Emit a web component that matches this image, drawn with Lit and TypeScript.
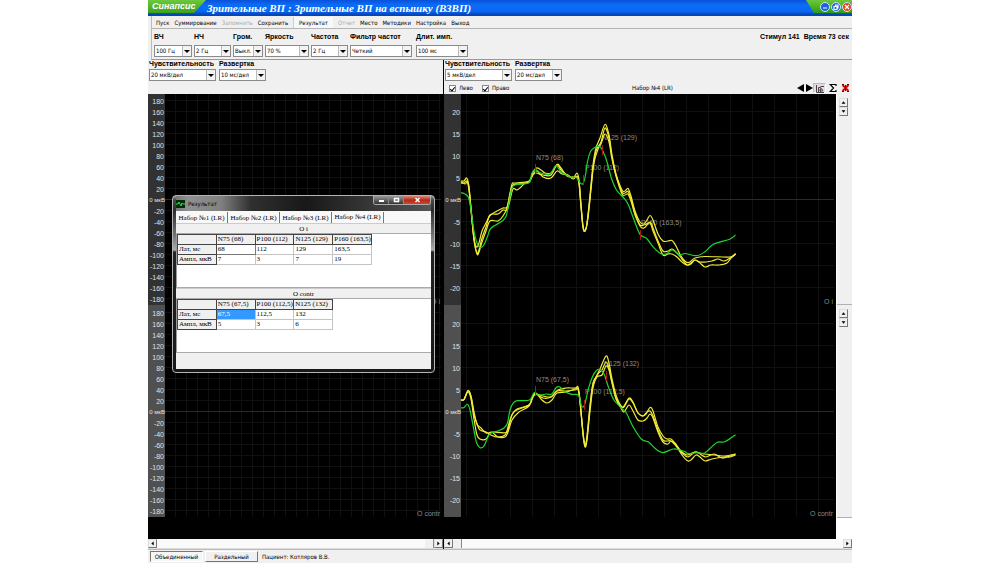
import { LitElement, html, svg, css } from "lit";
import { customElement, property, state } from "lit/decorators.js";

type Pt = [number, number];

/** Parses "x,y x,y ..." into points. */
const pts = (s: string): Pt[] =>
  s.trim().split(/\s+/).map((p) => p.split(",").map(Number) as Pt);

/** Smooth path through the points (Catmull-Rom converted to cubic Beziers). */
const smooth = (s: string): string => {
  const p = pts(s);
  let d = `M${p[0][0]} ${p[0][1]}`;
  for (let i = 0; i < p.length - 1; i++) {
    const a = p[i - 1] ?? p[i], b = p[i], c = p[i + 1], e = p[i + 2] ?? c;
    d += `C${(b[0] + (c[0] - a[0]) / 6).toFixed(1)} ${(b[1] + (c[1] - a[1]) / 6).toFixed(1)} ${(c[0] - (e[0] - b[0]) / 6).toFixed(1)} ${(c[1] - (e[1] - b[1]) / 6).toFixed(1)} ${c[0]} ${c[1]}`;
  }
  return d;
};

interface Mark { label: string; x: number; y: number; lx: number; ly: number; }
interface Channel { name: string; top: number; bottom: number; zero: number; green: string; yellow: string[]; marks: Mark[]; }

const CHANNELS: Channel[] = [
  {
    name: "O i", top: 94, bottom: 305, zero: 200,
    green: "461,192.7 465,194 468.5,197.5 470.7,208 474,231.5 477.5,244.5 480,247.5 483.5,245.5 487.5,236.5 490.7,228.5 501.5,221.5 506,216.5 508.5,205 512,188.3 516,184.7 529,182.7 531.6,174 535,169.3 540,172.7 545,174 550.5,173.7 556,165.5 560.5,171.5 566.5,175 571.5,177.5 576.5,177.5 580,182.7 583,183.5 585.5,175 587.5,161.5 590.5,151.5 595,147.3 600,146.7 604,153.5 607.5,163.5 611.5,178.5 616.5,190 625,199.3 628.5,205 633.5,218.5 640,234.3 646.5,238.3 653.5,247.3 661.5,254 667,253.5 672.5,250 679.5,255 685,253.5 696.5,255.7 705,251.7 713.5,244.3 730,239 735.5,235",
    yellow: [
      "461,181 464,181 466.5,178 468.5,184 471,208 474,238 476.5,247 479,243 482,231 486,223 490,215.5 497,211 503,208 507,207 510,195 512,184 516,183 529,181 533,172 536.5,168 541,170 545,173 551,173 557,165 561,170 567,175 573,178 577,173 579,180 581,204 583,226 585,231 587,224 590,195 593,165 596,148 600,138 605,124.5 609,135 612,155 616,174 622,190 625,191 628,188.5 631,196 635,211 640,222 644,224 647,220 650,215.5 653,220 658,234 663,241 668,241 672,240.5 676,246 681,256 686,262 690,262 695,258 705,256.5 730,257 735.5,254",
      "461,182 465,184 468,184 471,209 474,240 477,254 479,252 482,242 486,231 490,221 498,221 503,216 507,208 510,193 513,185 519,184 529,182 533,174 537,171 543,177 551,178 557,171 562,174 568,175 573,179 577,176 579,182 581,206 583,228 585,231 587,223 590,198 593,168 596,151 601,142 605,128 609,138 612,157 616,175 622,192 625,193 628,191.5 631,199 635,213 640,226 644,228 650,222 653,228 658,241 663,251 668,251 672,249 677,253 682,259 687,265 691,264 695,260 700,262 706,262 712,261 718,259 724,261 730,258 735.5,253.5",
      "461,183 464,183 467,181 469,187 471,210 474,239 477,253 479,250 482,238 486,227 490,215 498,214 503,210 507,210 510,200 513,189 517,190 521,187 525,183 529,182 533,175 536,173 543,175 551,175 557,164.5 561,168 567,176 573,177 577,177 579,184 581,207 583,226 585,231 588,218 591,189 594,163 598,149 601,144 605,134 609,142 612,159 616,176 622,194 625,195 628,194 631,201 635,215 640,225 644,225 650,223 653,231 658,243 663,255 668,254 672,254 677,257 682,262 687,265 691,263 695,260 700,263 705,267 711,265 719,265 727,263 731,258 735.5,254",
    ],
    marks: [
      { label: "N75 (68)", x: 535, y: 164, lx: 536, ly: 160 },
      { label: "P100 (112)", x: 583, y: 175, lx: 585, ly: 170 },
      { label: "N125 (129)", x: 602, y: 145, lx: 602, ly: 140 },
      { label: "P160 (163,5)", x: 640, y: 230, lx: 641, ly: 225 },
    ],
  },
  {
    name: "O contr", top: 305, bottom: 517, zero: 412,
    green: "461,408 464,407.5 467.5,404.3 470,410 473.5,428 476.5,442.5 480,447.7 484,446 487.5,438 490.5,433.3 498.5,430.7 504,428 507.5,423 510,410 513.5,402.7 517.5,400.7 529.5,400 534,392.7 538.5,395 546.5,394 551.5,394.3 556.5,387.3 560,387 565,391.7 571.5,394.3 578.5,395.3 581.5,406 584.5,405 588.5,388.3 592.5,376.7 596.5,370.5 600.7,369.7 604.5,375 608.5,387.3 614,400 623.5,410 626.5,413.3 633.5,427.5 641.5,439.3 648.5,442 655,448.3 662.5,452.7 673.5,449 683.5,451 688.5,453.7 696.5,452.7 705,452.7 716.5,442.7 725,441.7 735.5,434.7",
    yellow: [
      "461,400 464,399.5 468,390.5 471,396 474,412 477,424 481,428 486,433 493,432 506,432.5 509,426 512,415 517,409 529,405 533,397 536,394 543,398 551,397 558,390 566,388 575,388 578,387 580,400 583,434 585,446 587,436 590,405 593,383 596,377 600,369 606,356 609,363 612,379 616,395 621,406 624,406 629,398 633,402 638,413 643,416 646,414 650,407.5 653,411 658,427 663,436 667,439 671,439 675,443 681,451 687,455 695,452 704,454 715,455 725,456 735.5,454",
      "461,400 464,399.5 468,392 471,399 474,419 477,435 480,439 486,439 491,432 498,437 505,437 508,432 512,420 519,412 529,406 533,396 536,393 542,400 547,403 552,400 557,393 566,392 575,389 578,389 580,402 583,434 585,447 587,440 590,411 593,388 597,377 602,375 606,366 609,370 612,383 616,399 621,408 624,412 629,405 633,411 638,420 643,421 647,418 650,414 653,418 658,432 663,442 668,444 671,441 676,445 682,455 688,461 692,459 696,455 700,457 705,461 712,459 724,457 730,457 735.5,455",
      "461,400 464,399.5 468,391 471,397 474,414 477,424 480,430 486,432 491,435 497,437 505,435 508,427 511,417 515,411 529,405 532,398 536,394 543,396 551,397 557,391 566,391 575,390 578,389 580,401 583,432 585,444 587,438 590,408 593,384 598,374 602,370 606,362 609,368 612,382 616,398 621,406 624,407 629,399 633,403 638,413 643,416 647,412 650,411 653,416 658,430 663,440 667,441 671,441 676,446 682,453 688,457 695,452 700,454 706,457 714,454 722,458 730,456 735.5,454",
    ],
    marks: [
      { label: "N75 (67,5)", x: 535, y: 386, lx: 536, ly: 382 },
      { label: "P100 (112,5)", x: 584, y: 400, lx: 585, ly: 394 },
      { label: "N125 (132)", x: 606, y: 371, lx: 604, ly: 366 },
    ],
  },
];

const range = (from: number, to: number, step: number) =>
  Array.from({ length: Math.floor((to - from) / step) + 1 }, (_, i) => from + i * step);

@customElement("ep-chart")
class EpChart extends LitElement {
  @property({ type: Number }) left = 0;
  @property({ type: Number }) right = 0;
  @property({ type: Number }) cell = 11;
  @property({ type: Number }) unit = 20;
  @property({ type: Number }) steps = 9;
  @property({ type: Boolean }) traces = false;

  static styles = css`
    :host { display: block; background: #000; }
    svg { display: block; width: 100%; height: auto; font-family: "Liberation Sans", Arial, sans-serif; font-size: 7px; }
    .grid { stroke: #101010; stroke-width: 1; }
    .zero { stroke: #2a2a2a; stroke-width: 1; }
    .tick { fill: #e0e0e0; text-anchor: end; }
    .origin { font-size: 6px; }
    .name { fill: #8a8a8a; text-anchor: end; }
    .mark { fill: #8c8c8c; }
    .pin { stroke: #a81818; stroke-width: 1; }
    .yellow, .green { fill: none; stroke-width: 1.2; stroke-linejoin: round; }
    .yellow { stroke: #f0ea38; }
    .green { stroke: #1fd42c; }
  `;

  private channel(c: Channel, i: number) {
    const x0 = this.left + 17;
    return svg`
      <rect x=${this.left} y=${c.top} width="17" height=${c.bottom - c.top} fill=${i ? "#505050" : "#323232"}></rect>
      ${range(x0 + (this.cell === 22 ? 5 : 10), this.right - 2, this.cell).map((x) => svg`<line class="grid" x1=${x + 0.5} x2=${x + 0.5} y1=${c.top} y2=${c.bottom}></line>`)}
      ${range(-this.steps, this.steps, 1).map((n) => {
        const y = c.zero + n * this.cell;
        return y < c.top ? null : svg`
          <line class=${n ? "grid" : "zero"} x1=${x0} x2=${this.right - 2} y1=${y - 0.5} y2=${y - 0.5}></line>
          <text class=${n ? "tick" : "tick origin"} x=${n ? x0 - 1 : x0} y=${n ? y + 3 : y + 2}>${n ? -n * this.unit : "0 мкВ"}</text>`;
      })}
      <text class="name" x=${this.right - 3} y=${c.bottom - 1}>${c.name}</text>
      ${this.traces ? svg`
        ${c.marks.map((m) => svg`<text class="mark" x=${m.lx} y=${m.ly}>${m.label}</text>`)}
        ${c.yellow.map((y) => svg`<path class="yellow" d=${smooth(y)}></path>`)}
        <path class="green" d=${smooth(c.green)}></path>
        ${c.marks.map((m) => svg`<line class="pin" x1=${m.x + 0.5} x2=${m.x + 0.5} y1=${m.y} y2=${m.y + 10}></line>`)}` : null}
    `;
  }

  render() {
    return html`<svg viewBox="${this.left} 94 ${this.right - this.left} 445" role="img" aria-label="Кривые ВП">
      ${CHANNELS.map((c, i) => this.channel(c, i))}
    </svg>`;
  }
}

@customElement("combo-box")
class ComboBox extends LitElement {
  @property() label = "";
  @property() value = "";
  @property({ type: Number }) size = 38;

  static styles = css`
    :host { display: block; }
    label { display: block; height: var(--label-height, 12px); font: bold 7px/8px "Liberation Sans", Arial, sans-serif; color: #000; white-space: nowrap; }
    .box { display: grid; align-items: center; height: 12px; box-sizing: border-box; border: 1px solid #8a8a8a; background: #fff; }
    select { grid-area: 1 / 1; appearance: none; width: 100%; height: 10px; border: 0; margin: 0; padding: 0 8px 0 1px; background: transparent; color: #000; font: 6px/10px "DejaVu Sans Condensed", "Liberation Sans", sans-serif; outline: none; }
    svg { grid-area: 1 / 1; justify-self: end; pointer-events: none; box-sizing: border-box; width: 9px; height: 10px; background: #f2f2f2; border-left: 1px solid #bbb; }
  `;

  render() {
    return html`<label for="s">${this.label}</label>
      <div class="box" style="width:${this.size}px">
        <select id="s"><option>${this.value}</option></select>
        <svg viewBox="0 0 8 10" aria-hidden="true"><path d="M1 4h6L4 7z" fill="#000"/></svg>
      </div>`;
  }
}

const arrow = (dir: string) => {
  const d: Record<string, string> = {
    up: "M2 6h5L4.500 3z", down: "M2 3h5L4.500 6z", left: "M6 2v5L3 4.500z", right: "M3 2v5L6 4.500z",
  };
  return html`<button class="arrow" aria-label=${dir}><svg viewBox="0 0 9 9"><path d=${d[dir]} /></svg></button>`;
};

const TABLES = [
  { title: "O i", cols: ["N75 (68)", "P100 (112)", "N125 (129)", "P160 (163,5)"], rows: [["Лат, мс", "68", "112", "129", "163,5"], ["Ампл, мкВ", "7", "3", "7", "19"]] },
  { title: "O contr", cols: ["N75 (67,5)", "P100 (112,5)", "N125 (132)"], rows: [["Лат, мс", "67,5", "112,5", "132"], ["Ампл, мкВ", "5", "3", "6"]] },
];

@customElement("result-window")
class ResultWindow extends LitElement {
  @state() private tab = 4;

  static styles = css`
    :host { display: block; box-sizing: border-box; padding: 0 3px 3px; border: 1px solid #b4b4b4; border-radius: 4px; background: linear-gradient(#999 0, #484848 4px, #2c2c2c 14px, #777 40px, #aaa 54px, #222 56px, #181818 100%); font: 7px/10px "Liberation Serif", "Times New Roman", serif; color: #000; }
    * { box-sizing: border-box; }
    button { font: inherit; color: inherit; border: 0; padding: 0; margin: 0; }
    header { display: flex; align-items: center; height: 15px; gap: 3px; background: linear-gradient(90deg, #777, #909090 12px, #808080 45px, #303030 75px, #181818 130px, #555); }
    .icon { width: 9px; height: 8px; }
    h2 { flex: 1; margin: 0; font: 6px/10px "DejaVu Sans Condensed", "Liberation Sans", sans-serif; color: #000; }
    .controls { display: flex; align-self: flex-start; height: 9px; border: 1px solid #aaa; border-top: 0; border-radius: 0 0 3px 3px; overflow: hidden; }
    .controls button { display: grid; place-items: center; width: 15px; background: linear-gradient(#999, #333); border-right: 1px solid #888; }
    .controls .close { width: 26px; background: linear-gradient(#d98a7c, #b52a18 50%, #d0452c); border: 0; }
    .controls svg { width: 7px; height: 6px; stroke: #fff; fill: none; stroke-width: 2; }
    .body { background: #f0f0f0; }
    .tabs { display: flex; height: 12px; padding-top: 1px; background: #f8f8f8; }
    .tabs button { width: 52px; padding-top: 1px; white-space: nowrap; background: transparent; border-right: 1px solid #777; }
    .tabs .active { padding: 0 0 1px; }
    h3 { margin: 0; height: 11px; font: 7px/10px "Liberation Serif", serif; text-align: center; background: #f0f0f0; border-top: 1px solid #ccc; border-bottom: 1px solid #aaa; }
    .sheet { height: 54px; background: #fff; border-left: 1px solid #999; border-bottom: 1px solid #aaa; }
    table { border-collapse: collapse; table-layout: fixed; }
    th, td { height: 10px; padding: 0 0 0 1px; border: 1px solid #c4c4c4; font-weight: normal; line-height: 9px; text-align: left; white-space: nowrap; overflow: hidden; }
    th { background: #f0f0f0; border-color: #444; }
    .focus { border-color: #777; }
    .selected { background: #3399ff; color: #fff; }
    footer { height: 16px; }
  `;

  render() {
    return html`
      <header>
        <svg class="icon" viewBox="0 0 9 8"><path fill="#062c0c" d="M0 0h9v8H0z"/><path d="M0 4h2l1-2 2 4 1-3 1 1h2" fill="none" stroke="#22e050"/></svg>
        <h2>Результат</h2>
        <div class="controls">
          <button aria-label="Свернуть"><svg viewBox="0 0 7 6"><path d="M1 4h5"/></svg></button>
          <button aria-label="Развернуть"><svg viewBox="0 0 7 6"><path d="M1.500 1.500h4v3h-4z" stroke-width="1.500"/></svg></button>
          <button class="close" aria-label="Закрыть"><svg viewBox="0 0 7 6"><path d="M1.500 1l4 4m0-4l-4 4" stroke-width="1.500"/></svg></button>
        </div>
      </header>
      <div class="body">
        <div class="tabs" role="tablist">
          ${[1, 2, 3, 4].map((n) => html`<button role="tab" aria-selected=${n === this.tab} class=${n === this.tab ? "active" : ""} @click=${() => (this.tab = n)}>Набор №${n} (LR)</button>`)}
        </div>
        ${TABLES.map((t, ti) => html`
          <h3>${t.title}</h3>
          <div class="sheet"><table style="width:${(t.cols.length + 1) * 39}px">
            <thead><tr><th></th>${t.cols.map((c) => html`<th>${c}</th>`)}</tr></thead>
            <tbody>${t.rows.map((r, ri) => html`<tr><th>${r[0]}</th>${r.slice(1).map((v, ci) => html`<td class=${ri || ci ? "" : ti ? "selected" : "focus"}>${v}</td>`)}</tr>`)}</tbody>
          </table></div>`)}
        <footer></footer>
      </div>`;
  }
}

@customElement("app-root")
class AppRoot extends LitElement {
  static styles = css`
    :host { display: block; padding: 0 14.8vw; background: #fff; font: 6px/10px "DejaVu Sans Condensed", "Liberation Sans", sans-serif; color: #000; }
    * { box-sizing: border-box; }
    button { font: inherit; color: inherit; margin: 0; padding: 0; border: 0; background: transparent; white-space: nowrap; }
    .app { background: #f0f0f0; }
    .title { display: flex; height: 16px; background: linear-gradient(#0a50d8, #0a6cf5 30%, #0868f4 70%, #0644b8 92%); }
    .brand { width: 58px; padding-left: 4px; background: linear-gradient(#6cc83c, #2f9a14); clip-path: polygon(0 0, 100% 0, 46px 13px, 0 13px); color: #fff; font: italic bold 9px/12px "Liberation Sans", sans-serif; }
    h1 { flex: 1; margin: 0; padding-left: 1px; color: #fff; font: italic bold 11px/17px "Liberation Serif", serif; white-space: nowrap; }
    .wincontrols { display: flex; align-items: center; gap: 1px; height: 13px; padding-left: 14px; background: linear-gradient(#6cc83c, #2f9a14); clip-path: polygon(0 0, 100% 0, 100% 100%, 8px 100%); }
    .wincontrols button { display: grid; place-items: center; width: 10px; height: 10px; border: 1px solid #cfe4ff; border-radius: 50%; background: #1b62dc; }
    .wincontrols .close { background: #e04420; }
    .wincontrols svg { width: 6px; height: 6px; stroke: #fff; fill: none; stroke-width: 1.2; }
    .menu { display: flex; align-items: center; height: 13px; margin-left: 3px; padding: 1px 0 0 4px; gap: 5px; border-left: 1px solid #bbb; border-bottom: 1px solid #b4b4b4; }
    .menu .tool { align-self: stretch; padding: 0 5px; background: #f8f8f8; border-left: 1px solid #ccc; }
    .menu :disabled { color: #aaa; }
    .toolbar { display: flex; height: 31px; margin-left: 3px; padding: 4px 3px 0 2px; gap: 2px; border-left: 1px solid #bbb; border-bottom: 1px solid #999; }
    .toolbar combo-box:last-of-type { margin-left: 2px; }
    .stats { margin-left: auto; font: bold 7px/8px "Liberation Sans", Arial, sans-serif; white-space: pre; }
    .work { position: relative; display: grid; grid-template-columns: 295fr 1px 408fr; }
    .split { background: #000; }
    .settings { --label-height: 9px; display: flex; gap: 3px; height: 22px; padding-left: 1px; }
    .row { display: flex; align-items: center; height: 12px; padding: 0 0 0 5px; }
    .row label { display: flex; align-items: center; gap: 3px; width: 33px; }
    .row input { appearance: none; display: grid; place-items: center; width: 7px; height: 7px; margin: 0; border: 1px solid #888; background: #fff; }
    .row input:checked::before { content: ""; width: 2px; height: 4px; border: solid #000; border-width: 0 1px 1px 0; transform: rotate(40deg); }
    .row .set { flex: 1; padding-left: 117px; }
    .icons { display: flex; align-items: center; }
    .icons button { display: grid; place-items: center; height: 10px; }
    .icons svg { display: block; height: 10px; }
    .icons .wide { width: 13px; }
    .icons .on { background: #dedede; border: 1px solid #bbb; border-right-color: #fff; border-bottom-color: #fff; }
    .view { display: flex; }
    .view ep-chart { flex: 1; }
    .strip { display: flex; flex-direction: column; width: 16px; border-left: 1px solid #fff; }
    .strip div { display: flex; flex-direction: column; padding: 4px 0 0 2px; border-bottom: 1px solid #b0b0b0; }
    .s1 { flex: 211; }
    .s2 { flex: 212; }
    .s3 { flex: 22; background: #fff; }
    .arrow { display: block; width: 9px; height: 9px; background: #f0f0f0; border: 1px solid #ddd; border-right-color: #777; border-bottom-color: #777; }
    .arrow svg { display: block; width: 100%; height: 100%; }
    .scroll { display: flex; justify-content: space-between; height: 10px; background: #fafafa; border-bottom: 1px solid #ddd; }
    .scroll span { display: flex; }
    .thumb { display: block; width: 9px; height: 9px; background: #f0f0f0; border-right: 1px solid #888; }
    .status { display: flex; align-items: center; gap: 2px; height: 14px; padding-left: 2px; border-top: 1px solid #bbb; }
    .status button { width: 53px; height: 11px; border: 1px solid #fff; border-right-color: #777; border-bottom-color: #777; }
    .status .pressed { border-color: #777 #fff #fff #777; background: #f6f6f6; }
    .status p { margin: 0; padding-left: 2px; }
    result-window { position: absolute; left: 24px; top: 135px; width: 263px; }
  `;

  render() {
    return html`<div class="app">
      <div class="title">
        <div class="brand">Синапсис</div>
        <h1>Зрительные ВП : Зрительные ВП на вспышку (ВЗВП)</h1>
        <div class="wincontrols">
          <button aria-label="Свернуть"><svg viewBox="0 0 6 6"><path d="M1 4h4"/></svg></button>
          <button aria-label="Развернуть"><svg viewBox="0 0 6 6"><path d="M1 2.500h3v3H1zM2.500 2V1H5v3H4"/></svg></button>
          <button class="close" aria-label="Закрыть"><svg viewBox="0 0 6 6"><path d="M1 1l4 4M5 1L1 5"/></svg></button>
        </div>
      </div>
      <nav class="menu">
        <button>Пуск</button><button>Суммирование</button><button disabled>Запомнить</button><button>Сохранить</button>
        <button class="tool">Результат</button><button disabled>Отчет</button><button>Место</button><button>Методики</button><button>Настройка</button><button>Выход</button>
      </nav>
      <div class="toolbar">
        <combo-box label="ВЧ" value="100 Гц" size="38"></combo-box>
        <combo-box label="НЧ" value="2 Гц" size="37"></combo-box>
        <combo-box label="Гром." value="Выкл." size="30"></combo-box>
        <combo-box label="Яркость" value="70 %" size="44"></combo-box>
        <combo-box label="Частота" value="2 Гц" size="37"></combo-box>
        <combo-box label="Фильтр частот" value="Четкий" size="62"></combo-box>
        <combo-box label="Длит. имп." value="100 мс" size="52"></combo-box>
        <div class="stats">Стимул 141  Время 73 сек</div>
      </div>
      <div class="work">
        <section>
          <div class="settings">
            <combo-box label="Чувствительность" value="20 мкВ/дел" size="67"></combo-box>
            <combo-box label="Развертка" value="10 мс/дел" size="47"></combo-box>
          </div>
          <div class="row"></div>
          <ep-chart left="148" right="443" cell="11" unit="20" steps="9"></ep-chart>
          <div class="scroll"><span>${arrow("left")}</span><span><i class="thumb"></i>${arrow("right")}</span></div>
        </section>
        <div class="split"></div>
        <section>
          <div class="settings">
            <combo-box label="Чувствительность" value="5 мкВ/дел" size="67"></combo-box>
            <combo-box label="Развертка" value="20 мс/дел" size="47"></combo-box>
          </div>
          <div class="row">
            <label><input type="checkbox" checked />Лево</label>
            <label><input type="checkbox" checked />Право</label>
            <span class="set">Набор №4 (LR)</span>
            <div class="icons">
              <button aria-label="Назад"><svg width="9" viewBox="0 0 9 10"><path d="M8 1v8L1 5z"/></svg></button>
              <button aria-label="Вперед"><svg width="8" viewBox="0 0 8 10"><path d="M1 1v8l7-4z"/></svg></button>
              <button class="wide on" aria-label="График"><svg width="10" viewBox="0 0 10 10"><path d="M1.500 1v7.500H9M3.500 8V3.500h2V8M5.500 2.500H9" fill="none" stroke="#444"/><path d="M4 7l2-3 2 3" fill="none" stroke="#b04a70"/><path d="M7 5v3" stroke="#3448c0"/></svg></button>
              <button class="wide" aria-label="Сумма"><svg width="8" viewBox="0 0 8 10"><path d="M7 3V1.500H1.200L4.500 5 1.200 8.500H7V7" fill="none" stroke="#000" stroke-width="1.200"/></svg></button>
              <button class="wide" aria-label="Удалить"><svg width="9" viewBox="0 0 9 10"><path d="M1.500 2l6 6m0-6l-6 6" stroke="#d80808" stroke-width="2"/><path d="M4.500 2v6M1 1.500h2M6 1.500h2M1 8.500h2M6 8.500h2" stroke="#600" fill="none"/></svg></button>
            </div>
          </div>
          <div class="view">
            <ep-chart left="444" right="836" cell="22" unit="5" steps="4" traces></ep-chart>
            <div class="strip">
              <div class="s1">${arrow("up")}${arrow("down")}</div>
              <div class="s2">${arrow("up")}${arrow("down")}</div>
              <span class="s3"></span>
            </div>
          </div>
          <div class="scroll"><span>${arrow("left")}<i class="thumb"></i></span><span>${arrow("right")}</span></div>
        </section>
        <result-window></result-window>
      </div>
      <div class="status">
        <button class="pressed">Объединенный</button><button>Раздельный</button>
        <p>Пациент: Котляров В.В.</p>
      </div>
    </div>`;
  }
}
